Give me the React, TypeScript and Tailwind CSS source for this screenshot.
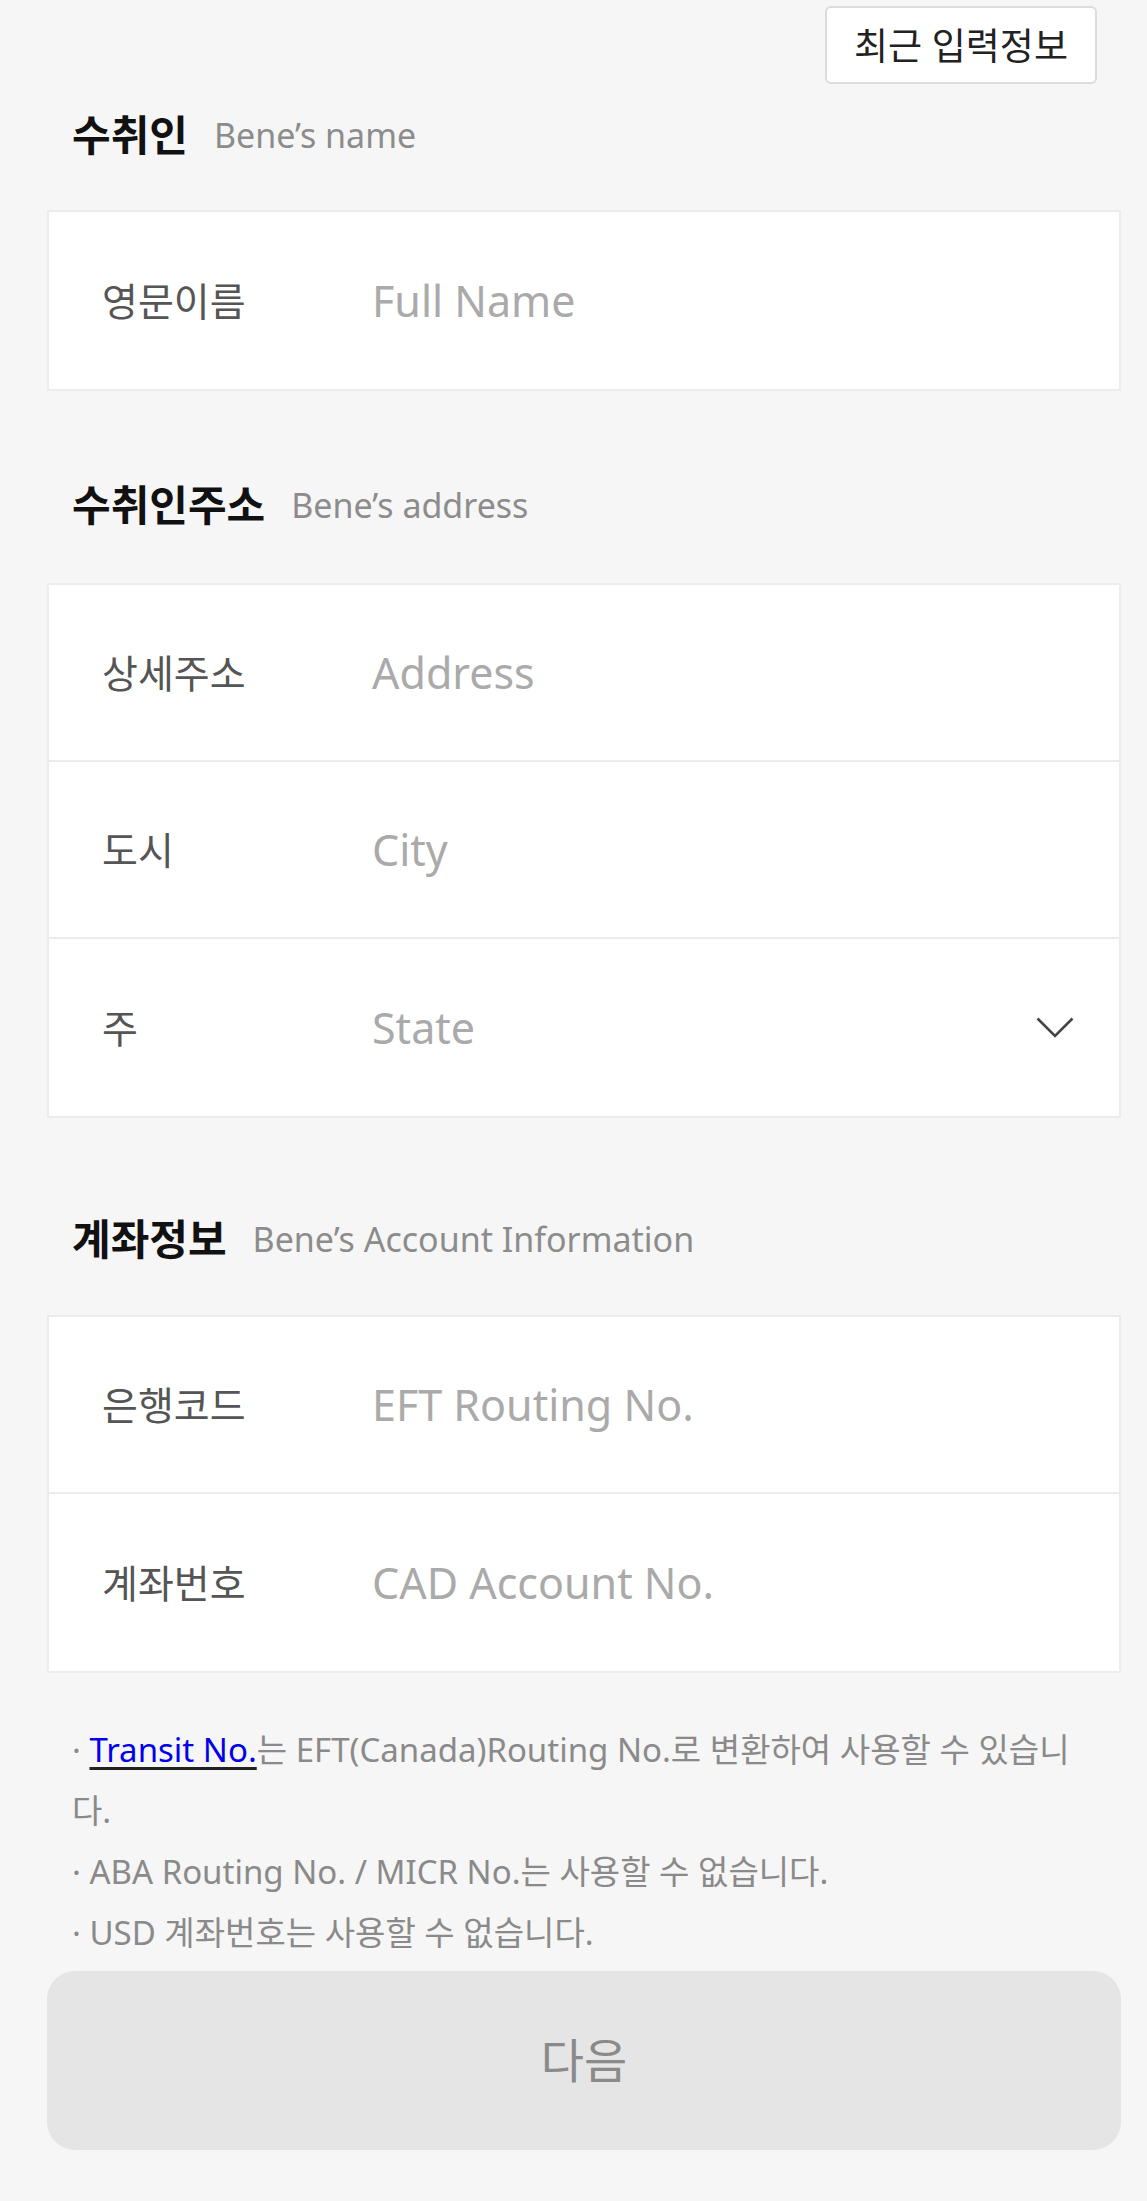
import React from 'react';

const sans = "font-['Noto_Sans','Noto_Sans_CJK_KR',sans-serif]";

interface Field {
  label: string;
  placeholder: string;
  select?: boolean;
}

function Chevron() {
  return (
    <svg width="38" height="21" viewBox="0 0 38 21" fill="none">
      <polyline points="1.5,1.5 19,19 36.5,1.5" stroke="#444" strokeWidth="2.6" />
    </svg>
  );
}

function SectionTitle({ title, sub, mt }: { title: string; sub: string; mt: string }) {
  return (
    <div className={`flex items-center h-[52px] pl-[25px] ${mt}`}>
      <span className="text-[42px] leading-none font-bold text-[#111]">{title}</span>
      <span className="ml-[26px] text-[34px] leading-none text-[#8c8c8c]">{sub}</span>
    </div>
  );
}

function FieldCard({ fields }: { fields: Field[] }) {
  return (
    <div className="bg-white border-2 border-[#ececec] divide-y-2 divide-[#ececec]">
      {fields.map((f) => (
        <div key={f.label} className="flex items-center h-[177px] pl-[53px] pr-[45px]">
          <span className="w-[270px] text-[39px] leading-none text-[#555]">{f.label}</span>
          <span className="flex-1 text-[43px] leading-none text-[#aaaaaa]">{f.placeholder}</span>
          {f.select && <Chevron />}
        </div>
      ))}
    </div>
  );
}

export default function App() {
  return (
    <div className={`min-h-screen bg-[#f6f6f6] ${sans}`}>
      <div className="w-[1074px] ml-[47px] pt-[6px] pb-[51px]">
        <div className="flex justify-end pr-[24px]">
          <button className="h-[78px] w-[272px] bg-white border-2 border-[#dcdcdc] rounded-[6px] text-[37px] text-[#222] leading-none">
            최근 입력정보
          </button>
        </div>

        <SectionTitle title="수취인" sub="Bene’s name" mt="mt-[25px]" />
        <div className="mt-[49px]">
          <FieldCard fields={[{ label: '영문이름', placeholder: 'Full Name' }]} />
        </div>

        <SectionTitle title="수취인주소" sub="Bene’s address" mt="mt-[88px]" />
        <div className="mt-[52px]">
          <FieldCard
            fields={[
              { label: '상세주소', placeholder: 'Address' },
              { label: '도시', placeholder: 'City' },
              { label: '주', placeholder: 'State', select: true },
            ]}
          />
        </div>

        <SectionTitle title="계좌정보" sub="Bene’s Account Information" mt="mt-[95px]" />
        <div className="mt-[50px]">
          <FieldCard
            fields={[
              { label: '은행코드', placeholder: 'EFT Routing No.' },
              { label: '계좌번호', placeholder: 'CAD Account No.' },
            ]}
          />
        </div>

        <div className="mt-[46px] pl-[25px] text-[33px] leading-[61px] text-[#8a8a8a] whitespace-nowrap">
          <p>
            ·{' '}
            <a href="#" className="text-[#0000ee] underline decoration-[#222] underline-offset-[5px]">
              Transit No.
            </a>
            는 EFT(Canada)Routing No.로 변환하여 사용할 수 있습니
            <br />
            다.
          </p>
          <p>· ABA Routing No. / MICR No.는 사용할 수 없습니다.</p>
          <p>· USD 계좌번호는 사용할 수 없습니다.</p>
        </div>

        <button className="mt-[8px] w-full h-[179px] rounded-[28px] bg-[#e5e5e5] text-[47px] text-[#8a8a8a] leading-none">
          다음
        </button>
      </div>
    </div>
  );
}
